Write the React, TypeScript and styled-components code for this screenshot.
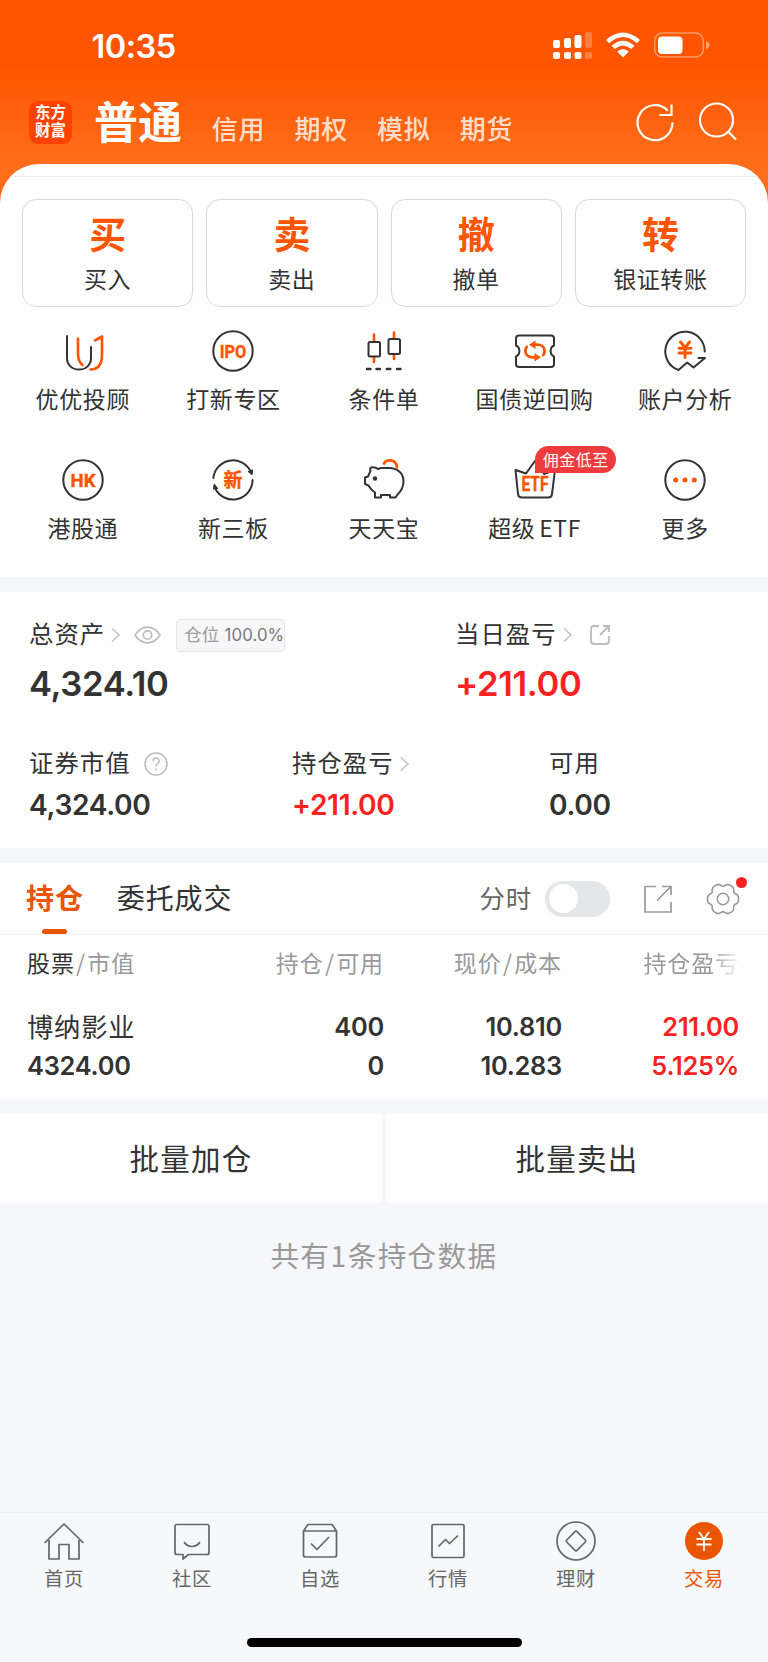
import React from "react";
import styled, { createGlobalStyle, css } from "styled-components";

const ORANGE = "#ff5500";
const INK = "#333333";
const RED = "#f92222";
const MIST = "#f6f7fa";
const CJK = `"Noto Sans CJK SC", sans-serif`;
const NUM = `Inter, "Noto Sans CJK SC", sans-serif`;

const GlobalStyle = createGlobalStyle`
  * { box-sizing: border-box; }
  body { margin: 0; background: ${MIST}; color: ${INK}; font-family: ${CJK}; }
  svg { display: block; flex: none; overflow: visible; }
`;

const Screen = styled.div`
  width: 768px;
  height: 1662px;
  display: flex;
  flex-direction: column;
  overflow: hidden;
  background: ${MIST};
`;

/* ---------- header ---------- */
const Hero = styled.header`
  height: 205px;
  flex: none;
  background: linear-gradient(180deg, #ff5500 0, #ff5500 68px, #ff6d1a 160px, #ff6f1c 205px);
`;
const StatusBar = styled.div`
  height: 92px;
  display: flex;
  align-items: flex-start;
  padding: 26px 59px 0 91.5px;
`;
const Clock = styled.span`
  font: 600 32.5px/41px ${NUM};
  color: #fff;
  letter-spacing: -0.5px;
  flex: 1;
`;
const StatusIcons = styled.div`
  display: flex;
  align-items: flex-start;
  padding-top: 6px;
  gap: 14px;
`;
const NavBar = styled.div`
  height: 71px;
  display: flex;
  padding: 0 30px 0 29px;
`;
const Logo = styled.div`
  width: 43px;
  height: 43px;
  margin-top: 9px;
  border-radius: 9px;
  background: #ff4200;
  color: #fff;
  font: 700 15.5px/18px "Liberation Serif", "Noto Sans CJK SC", serif;
  text-align: center;
  padding-top: 3px;
`;
const LogoLine = styled.div`
  height: 18px;
`;
const ActiveMode = styled.h1`
  margin: -3px 0 0 22px;
  font: 700 44px/62px ${CJK};
  color: #fff;
  width: 89px;
  white-space: nowrap;
`;
const Mode = styled.span`
  margin: 16.5px 0 0 28.7px;
  font: 500 26px/38px ${CJK};
  letter-spacing: 0.8px;
  color: rgba(255, 255, 255, 0.8);
  width: 54px;
  white-space: nowrap;
`;
const NavActions = styled.div`
  display: flex;
  gap: 23px;
  margin: 10px 0 0 auto;
`;

/* ---------- trading sheet ---------- */
const Sheet = styled.section`
  height: 413.5px;
  margin-top: -41.5px;
  flex: none;
  border-radius: 39px 39px 0 0;
  background: #fff;
  overflow: hidden;
`;
const SheetRule = styled.div`
  height: 13px;
  border-bottom: 1px solid #ededed;
`;
const TradeRow = styled.div`
  display: grid;
  grid-template-columns: repeat(4, 1fr);
  gap: 13px;
  padding: 22px 22px 0;
`;
const TradeCard = styled.div`
  height: 108px;
  border: 1px solid #d8d8d8;
  border-radius: 14px;
  text-align: center;
`;
const TradeGlyph = styled.div`
  margin: 9px 0 5px;
  font: 700 37px/48px ${CJK};
  color: ${ORANGE};
`;
const Label = styled.span`
  display: block;
  font: 400 23px/32px ${CJK};
  letter-spacing: 0.6px;
  word-spacing: -2px;
  white-space: nowrap;
  text-align: center;
`;
const ShortcutGrid = styled.div`
  display: grid;
  grid-template-columns: repeat(5, 1fr);
  padding: 23px 7.5px 0;
  row-gap: 42px;
`;
const Shortcut = styled.div`
  position: relative;
  height: 87px;
  display: flex;
  flex-direction: column;
  align-items: center;
  gap: 10.5px;
`;
const Promo = styled.span`
  position: absolute;
  left: 76px;
  top: -13px;
  width: 81px;
  height: 27px;
  border-radius: 13.5px 13.5px 13.5px 0;
  background: #ee3b3d;
  color: #fff;
  font: 400 16px/26px ${CJK};
  letter-spacing: 0.5px;
  text-align: center;
`;

/* ---------- assets ---------- */
const Band = styled.div<{ $h: number }>`
  height: ${(p) => p.$h}px;
  flex: none;
`;
const Assets = styled.section`
  height: 256px;
  flex: none;
  background: #fff;
  padding: 25px 29px 0;
`;
const AssetRow = styled.div<{ $cols: string; $h: number }>`
  display: grid;
  grid-template-columns: ${(p) => p.$cols};
  height: ${(p) => p.$h}px;
`;
const Metric = styled.div`
  display: flex;
  flex-direction: column;
`;
const MetricTitle = styled.div`
  height: 36px;
  display: flex;
  align-items: center;
`;
const MetricName = styled.span`
  font: 400 24.4px/34px ${CJK};
  letter-spacing: 1px;
  margin: -5px 6px 0 0;
  white-space: nowrap;
`;
const Amount = styled.span<{ $size: number; $gain?: boolean }>`
  font: 600 ${(p) => p.$size}px/44px ${NUM};
  letter-spacing: -0.35px;
  color: ${(p) => (p.$gain ? RED : INK)};
  ${(p) =>
    p.$size > 30
      ? css`
          margin-top: 8px;
        `
      : css`
          margin-top: 1px;
        `}
`;
const Ratio = styled.span`
  display: flex;
  align-items: center;
  width: 109px;
  height: 33px;
  margin-left: 15px;
  padding-left: 7px;
  border: 1px solid #e3e3e9;
  border-radius: 5px;
  background: #f7f7fa;
  white-space: nowrap;
`;
const RatioName = styled.span`
  font: 400 17.5px/26px ${CJK};
  color: #999;
  margin-top: -2px;
  width: 40.5px;
`;
const RatioValue = styled.span`
  font: 400 16.8px/26px ${NUM};
  color: #777;
  letter-spacing: 0.1px;
  margin-top: -1px;
`;

/* ---------- holdings ---------- */
const Holdings = styled.section`
  height: 236px;
  flex: none;
  background: #fff;
`;
const TabStrip = styled.div`
  height: 72px;
  display: flex;
  padding: 0 26px;
  border-bottom: 1px solid #f3f3f5;
`;
const Tab = styled.div<{ $active?: boolean }>`
  display: flex;
  flex-direction: column;
  align-items: center;
  padding-top: 13px;
  margin-right: 33px;
  font: ${(p) => (p.$active ? 700 : 400)} 28px/42px ${CJK};
  letter-spacing: 0.9px;
  color: ${(p) => (p.$active ? "#ea5504" : INK)};
  white-space: nowrap;
  &::after {
    content: "";
    width: 25px;
    height: 5px;
    margin-top: 11px;
    border-radius: 2.5px;
    background: ${(p) => (p.$active ? "#ea5504" : "transparent")};
  }
`;
const Tools = styled.div`
  display: flex;
  align-items: center;
  height: 72px;
  margin-left: auto;
`;
const ToolLabel = styled.span`
  font: 400 25.5px/38px ${CJK};
  letter-spacing: 0.8px;
  color: #666;
  margin: -4px 13px 0 0;
`;
const Switch = styled.span`
  width: 64.5px;
  height: 36.5px;
  border-radius: 19px;
  background: #e5e6e8;
  padding: 3.5px;
  margin-right: 34.5px;
  &::before {
    content: "";
    display: block;
    width: 29px;
    height: 29px;
    border-radius: 50%;
    background: #fff;
  }
`;
const GearBox = styled.span`
  position: relative;
  margin: 0 2px 0 34px;
`;
const Dot = styled.i`
  position: absolute;
  right: -7px;
  top: -5.5px;
  width: 11px;
  height: 11px;
  border-radius: 50%;
  background: #f92222;
`;
const Columns = styled.div`
  display: grid;
  grid-template-columns: 200px 157px 178px 177px;
  padding-left: 27px;
`;
const HeadRow = styled(Columns)`
  padding-top: 9.5px;
  font: 400 23px/34px ${CJK};
  letter-spacing: 0.9px;
  color: #999;
  white-space: nowrap;
`;
const HeadCell = styled.span<{ $right?: boolean; $fade?: boolean }>`
  text-align: ${(p) => (p.$right ? "right" : "left")};
  ${(p) =>
    p.$fade &&
    css`
      mask-image: linear-gradient(90deg, #000 148px, transparent 180px);
    `}
`;
const Strong = styled.span`
  color: ${INK};
`;
const Slash = styled.span`
  margin: 0 1.3px;
`;
const StockRow = styled(Columns)`
  padding-top: 28.5px;
`;
const StockCell = styled.div<{ $right?: boolean; $gain?: boolean }>`
  display: flex;
  flex-direction: column;
  align-items: ${(p) => (p.$right ? "flex-end" : "flex-start")};
  color: ${(p) => (p.$gain ? RED : INK)};
`;
const StockName = styled.span`
  font: 400 26.3px/39px ${CJK};
  letter-spacing: 0.8px;
  margin-top: -1.5px;
  height: 40.5px;
`;
const Figure = styled.span`
  font: 600 25.4px/39px ${NUM};
  letter-spacing: -0.25px;
`;

/* ---------- batch actions ---------- */
const BatchRow = styled.div`
  height: 90px;
  flex: none;
  display: grid;
  grid-template-columns: 1fr 1fr;
  gap: 4px;
`;
const BatchButton = styled.div`
  background: #fff;
  text-align: center;
  font: 400 29.5px/88px ${CJK};
  letter-spacing: 1.3px;
`;
const Summary = styled.p`
  margin: 30.5px 0 0;
  text-align: center;
  font: 400 28.6px/42px ${CJK};
  letter-spacing: 1.4px;
  color: #999;
`;

/* ---------- bottom bar ---------- */
const BottomBar = styled.nav`
  margin-top: auto;
  height: 150px;
  border-top: 1.5px solid #ebecee;
  background: #f7f8fa;
  display: flex;
  flex-direction: column;
  align-items: center;
`;
const BottomTabs = styled.div`
  width: 100%;
  height: 125px;
  display: grid;
  grid-template-columns: repeat(6, 1fr);
  padding-top: 7px;
`;
const BottomTab = styled.div<{ $active?: boolean }>`
  display: flex;
  flex-direction: column;
  align-items: center;
  gap: 1.5px;
  color: ${(p) => (p.$active ? "#ea5504" : "#666")};
  font: 400 19.3px/28px ${CJK};
  letter-spacing: 0.6px;
`;
const HomeIndicator = styled.div`
  width: 275px;
  height: 9px;
  border-radius: 5px;
  background: #000;
`;

/* ---------- icons ---------- */
const Ico = ({ children, s = 42 }: { children: React.ReactNode; s?: number }) => (
  <svg width={s} height={s} viewBox={`${-s / 2} ${-s / 2} ${s} ${s}`} fill="none" stroke={INK} strokeWidth="2" strokeLinecap="round" strokeLinejoin="round">
    {children}
  </svg>
);
const IconText = styled.text`
  font-family: Roboto, "Noto Sans CJK SC", sans-serif;
  font-weight: 700;
  fill: ${ORANGE};
  stroke: ${ORANGE};
  stroke-width: 0.4px;
  text-anchor: middle;
`;

const Chevron = () => (
  <svg width="9" height="14" viewBox="0 0 9 14" fill="none" stroke="#c4c4c4" strokeWidth="1.6">
    <path d="M1 0.5 8 7 1 13.5" />
  </svg>
);

const gearPath =
  Array.from({ length: 72 }, (_, i) => {
    const a = (i * Math.PI) / 36;
    const r = 14.5 + 1.4 * Math.cos(6 * a) - 0.4 * Math.cos(12 * a);
    return `${i ? "L" : "M"}${(r * Math.cos(a)).toFixed(2)} ${(r * Math.sin(a)).toFixed(2)}`;
  }).join("") + "Z";

const shortcuts: { name: string; icon: React.ReactNode; promo?: string }[] = [
  {
    name: "优优投顾",
    icon: (
      <Ico>
        <path d="M-16-15V7C-16 14-11 18.5-4 18.5S8 14 8 7V-4" />
        <g stroke={ORANGE} strokeWidth="2.6">
          <path d="M-5-12.5V3C-5 8-4 11-.5 14" />
          <path d="M12-10.5 19-14.5V4C19 13 15 18.3 7.500 18.500" />
        </g>
      </Ico>
    ),
  },
  {
    name: "打新专区",
    icon: (
      <Ico>
        <circle r="19.7" />
        <IconText y="6.600" fontSize="18.500" textLength="26.500" lengthAdjust="spacingAndGlyphs">IPO</IconText>
      </Ico>
    ),
  },
  {
    name: "条件单",
    icon: (
      <Ico>
        <g stroke={ORANGE} strokeWidth="2.600">
          <path d="M-10-16.500V-10M-10 6V11M10-18.500V-13M10 3V8" />
        </g>
        <rect x="-15.500" y="-9" width="11.500" height="14.500" rx="1.500" />
        <rect x="4.500" y="-12" width="11.500" height="15" rx="1.500" />
        <path d="M-17 18h3.500M-7.500 18h3.500M2.800 18h3.500M13 18h3.500" strokeWidth="2.400" />
      </Ico>
    ),
  },
  {
    name: "国债逆回购",
    icon: (
      <Ico>
        <path d="M-16-15.500H16Q19-15.500 19-12.500V-5.500C14.500-3.500 14.500 3.500 19 5.500V13Q19 16 16 16H-16Q-19 16-19 13V5.500C-14.500 3.500-14.500-3.500-19-5.500V-12.500Q-19-15.500-16-15.500Z" />
        <g stroke={ORANGE} strokeWidth="2.800">
          <path d="M0-6.300H2C7-6.300 9.600-3.500 9.600 0Q9.600 2.200 8.300 4" />
          <path d="M0 6.300H-2C-7 6.300-9.600 3.500-9.600 0Q-9.600-2.200-8.300-4" />
        </g>
        <path d="M-6-6.300.5-10.500V-2.100ZM6 6.300-.5 10.500V2.100Z" fill={ORANGE} stroke="none" />
      </Ico>
    ),
  },
  {
    name: "账户分析",
    icon: (
      <Ico>
        <path d="M19.700.5A19.700 19.700 0 1 0-6.500 19L2.200 11.500 8.500 16.500 20 7H13.500" />
        <path d="M-4.500-9 0-3.300 4.500-9M0-3V6.500M-6-2.800H6M-6 2H6" stroke={ORANGE} strokeWidth="2.900" />
      </Ico>
    ),
  },
  {
    name: "港股通",
    icon: (
      <Ico>
        <circle r="19.700" />
        <IconText y="6.600" fontSize="18.500" textLength="25" lengthAdjust="spacingAndGlyphs">HK</IconText>
      </Ico>
    ),
  },
  {
    name: "新三板",
    icon: (
      <Ico>
        <path d="M-19.600-2A19.700 19.700 0 0 1 17.500-9M19.600 0A19.700 19.700 0 0 1-17.500 9" />
        <path d="M15.500-8.500 19.500-10 19-5.500ZM-15.500 8.500-19.500 9-18.800 4.500Z" fill={INK} strokeWidth="1.200" />
        <IconText y="6.800" fontSize="19">新</IconText>
      </Ico>
    ),
  },
  {
    name: "天天宝",
    icon: (
      <Ico>
        <path d="M0-16.500C1.500-21 12-21.500 13-13" stroke={ORANGE} strokeWidth="2.800" />
        <path d="M-13-12.500Q-14.500-11.500-13.500-9L-16-3.500-19-2.500V4L-15.500 5.500Q-13 10-9 12.500V17.500H-3V15H6V17.500H11.500L13.500 14.500Q19.500 9 19.500 1C19.500-7 13-12 5-12H-3L-6-11Q-9-13.500-13-12.500Z" />
        <circle cx="-9" cy="-1.500" r="2.200" fill={INK} stroke="none" />
      </Ico>
    ),
  },
  {
    name: "超级 ETF",
    promo: "佣金低至",
    icon: (
      <Ico>
        <path d="M-19.500-10-17 14Q-16.500 17.500-13 17.500H13.500Q16.500 17.500 17 14L20-10 9-6 0-19-9-6.500Z" />
        <IconText y="11" fontSize="19.500" textLength="27" lengthAdjust="spacingAndGlyphs">ETF</IconText>
      </Ico>
    ),
  },
  {
    name: "更多",
    icon: (
      <Ico>
        <circle r="19.700" />
        <g fill={ORANGE} stroke="none">
          <circle cx="-9.300" r="2.500" />
          <circle r="2.500" />
          <circle cx="9.300" r="2.500" />
        </g>
      </Ico>
    ),
  },
];

const bottomTabs: { name: string; active?: boolean; icon: React.ReactNode }[] = [
  { name: "首页", icon: <path d="M-19.500 2 0-17 19.500 2M-15-1V18H-5V3.500H5V18H15V-1" /> },
  { name: "社区", icon: <path d="M-15-16.500H15Q17-16.500 17-14.500V11.500Q17 13.500 15 13.500H-3.500L-9 18V13.500H-15Q-17 13.500-17 11.500V-14.500Q-17-16.500-15-16.500ZM-8 1C-4 7 4 7 8 1" /> },
  { name: "自选", icon: <path d="M-16.500-10-12-16.500H12L16.500-10V14Q16.500 16 14.500 16H-14.500Q-16.500 16-16.500 14ZM-16.500-10H16.500M-9 2.500-3 8.500 9-4" /> },
  { name: "行情", icon: <path d="M-14.500-16.500H14.500Q16-16.500 16-15V15Q16 16.500 14.500 16.500H-14.500Q-16 16.500-16 15V-15Q-16-16.500-14.500-16.500ZM-9.500 5.500-2.500-1.500 1.500 2.500 10-5.500" /> },
  {
    name: "理财",
    icon: (
      <>
        <circle r="19" />
        <path d="M-1-9.300Q0-10.300 1-9.300L9.300-1Q10.300 0 9.300 1L1 9.300Q0 10.300-1 9.300L-9.300 1Q-10.300 0-9.300-1Z" />
      </>
    ),
  },
  {
    name: "交易",
    active: true,
    icon: (
      <>
        <circle r="19" fill="#ea5504" stroke="none" />
        <path d="M-5-9 0-2 5-9M0-2V10M-7.500-2H7.500M-7.500 3.500H7.500" stroke="#fff" strokeWidth="1.800" />
      </>
    ),
  },
];

const trades = [
  ["买", "买入"],
  ["卖", "卖出"],
  ["撤", "撤单"],
  ["转", "银证转账"],
];

export default function App() {
  return (
    <Screen>
      <GlobalStyle />
      <Hero>
        <StatusBar>
          <Clock>10:35</Clock>
          <StatusIcons>
            <svg width="39" height="27" viewBox="0 0 39 27" fill="#fff">
              <rect x="0" y="8" width="7" height="8" rx="2" />
              <rect x="11" y="6" width="7" height="10" rx="2" />
              <rect x="21.500" y="3" width="7" height="13" rx="2" />
              <rect x="32" y="0" width="7" height="16" rx="2" opacity=".25" />
              <rect x="0" y="20" width="7" height="7" rx="2" />
              <rect x="11" y="20" width="7" height="7" rx="2" />
              <rect x="21.500" y="20" width="7" height="7" rx="2" />
              <rect x="32" y="20" width="7" height="7" rx="2" opacity=".25" />
            </svg>
            <svg width="34" height="26" viewBox="0 0 34 26" fill="#fff">
              <path d="M0 8Q17-7 34 8L30.800 11.300Q17-1.300 3.200 11.300Z" />
              <path d="M5.500 13.800Q17 3.500 28.500 13.800L25.200 17Q17 10 8.800 17Z" />
              <path d="M11.200 19.500Q17 14.500 22.800 19.500L17 25.500Z" />
            </svg>
            <svg width="55" height="26" viewBox="0 0 55 26">
              <rect x="0.700" y="1" width="48.600" height="24" rx="7.500" fill="none" stroke="#fff" strokeOpacity=".4" strokeWidth="1.500" />
              <rect x="4" y="4.500" width="24.500" height="17.500" rx="4" fill="#fff" />
              <path d="M52 9Q55.500 10 55.500 13T52 17Z" fill="#fff" opacity=".45" />
            </svg>
          </StatusIcons>
        </StatusBar>
        <NavBar>
          <Logo>
            <LogoLine>东方</LogoLine>
            <LogoLine>财富</LogoLine>
          </Logo>
          <ActiveMode>普通</ActiveMode>
          <Mode>信用</Mode>
          <Mode>期权</Mode>
          <Mode>模拟</Mode>
          <Mode>期货</Mode>
          <NavActions>
            <svg width="40" height="40" viewBox="0.500 0.500 40 40" fill="none" stroke="#fff" strokeWidth="2.200">
              <path d="M33.300 9.200A17.500 17.500 0 1 0 38 21M37 3V13.500H25" />
            </svg>
            <svg width="40" height="40" viewBox="0 0 40 40" fill="none" stroke="#fff" strokeWidth="2.200">
              <circle cx="18.500" cy="18" r="16.500" />
              <path d="M30 29.500 38 37.500" />
            </svg>
          </NavActions>
        </NavBar>
      </Hero>

      <Sheet>
        <SheetRule />
        <TradeRow>
          {trades.map(([glyph, name]) => (
            <TradeCard key={name}>
              <TradeGlyph>{glyph}</TradeGlyph>
              <Label>{name}</Label>
            </TradeCard>
          ))}
        </TradeRow>
        <ShortcutGrid>
          {shortcuts.map((s) => (
            <Shortcut key={s.name}>
              {s.icon}
              <Label>{s.name}</Label>
              {s.promo && <Promo>{s.promo}</Promo>}
            </Shortcut>
          ))}
        </ShortcutGrid>
      </Sheet>

      <Band $h={15} />

      <Assets>
        <AssetRow $cols="426px 1fr" $h={129}>
          <Metric>
            <MetricTitle>
              <MetricName>总资产</MetricName>
              <Chevron />
              <svg width="41" height="18" viewBox="-14 0 41 18" fill="none" stroke="#bbb" strokeWidth="1.700">
                <path d="M1 9C8-1.500 19-1.500 26 9 19 19.500 8 19.500 1 9Z" />
                <circle cx="13.500" cy="9" r="4.200" />
              </svg>
              <Ratio>
                <RatioName>仓位</RatioName>
                <RatioValue>100.0%</RatioValue>
              </Ratio>
            </MetricTitle>
            <Amount $size={34.6}>4,324.10</Amount>
          </Metric>
          <Metric>
            <MetricTitle>
              <MetricName>当日盈亏</MetricName>
              <Chevron />
              <svg width="38" height="20" viewBox="-18 0 38 20" fill="none" stroke="#bbb" strokeWidth="1.800">
                <path d="M9 1H4Q1 1 1 4V16Q1 19 4 19H16Q19 19 19 16V11M13 1H19V7M19 1 10 10" />
              </svg>
            </MetricTitle>
            <Amount $size={34.6} $gain>+211.00</Amount>
          </Metric>
        </AssetRow>
        <AssetRow $cols="263px 257px 1fr" $h={90}>
          <Metric>
            <MetricTitle>
              <MetricName>证券市值</MetricName>
              <svg width="31" height="24" viewBox="-19 -12 31 24" fill="none" stroke="#bbb" strokeWidth="1.500">
                <circle r="11" />
                <path d="M-3-2.800C-3-7 3.200-7 3.200-3 3.200-.5 0-.5 0 2.500" />
                <path d="M0 4.500V6.200" />
              </svg>
            </MetricTitle>
            <Amount $size={28.2}>4,324.00</Amount>
          </Metric>
          <Metric>
            <MetricTitle>
              <MetricName>持仓盈亏</MetricName>
              <Chevron />
            </MetricTitle>
            <Amount $size={28.2} $gain>+211.00</Amount>
          </Metric>
          <Metric>
            <MetricTitle>
              <MetricName>可用</MetricName>
            </MetricTitle>
            <Amount $size={28.2}>0.00</Amount>
          </Metric>
        </AssetRow>
      </Assets>

      <Band $h={15} />

      <Holdings>
        <TabStrip>
          <Tab $active>持仓</Tab>
          <Tab>委托成交</Tab>
          <Tools>
            <ToolLabel>分时</ToolLabel>
            <Switch />
            <svg width="28" height="28" viewBox="0 0 28 28" fill="none" stroke="#999" strokeWidth="1.700">
              <path d="M12 1.500H1V27H27V17M18 1.500H27V10M27 1.500 13 15.500" />
            </svg>
            <GearBox>
              <svg width="34" height="34" viewBox="-17 -17 34 34" fill="none" stroke="#999" strokeWidth="1.600">
                <path d={gearPath} />
                <circle r="5.700" />
              </svg>
              <Dot />
            </GearBox>
          </Tools>
        </TabStrip>
        <HeadRow>
          <HeadCell><Strong>股票</Strong><Slash>/</Slash>市值</HeadCell>
          <HeadCell $right>持仓<Slash>/</Slash>可用</HeadCell>
          <HeadCell $right>现价<Slash>/</Slash>成本</HeadCell>
          <HeadCell $right $fade>持仓盈亏</HeadCell>
        </HeadRow>
        <StockRow>
          <StockCell>
            <StockName>博纳影业</StockName>
            <Figure>4324.00</Figure>
          </StockCell>
          <StockCell $right>
            <Figure>400</Figure>
            <Figure>0</Figure>
          </StockCell>
          <StockCell $right>
            <Figure>10.810</Figure>
            <Figure>10.283</Figure>
          </StockCell>
          <StockCell $right $gain>
            <Figure>211.00</Figure>
            <Figure>5.125%</Figure>
          </StockCell>
        </StockRow>
      </Holdings>

      <Band $h={14} />

      <BatchRow>
        <BatchButton>批量加仓</BatchButton>
        <BatchButton>批量卖出</BatchButton>
      </BatchRow>
      <Summary>共有1条持仓数据</Summary>

      <BottomBar>
        <BottomTabs>
          {bottomTabs.map((t) => (
            <BottomTab key={t.name} $active={t.active}>
              <svg width="42" height="42" viewBox="-21 -21 42 42" fill="none" stroke="#666" strokeWidth="1.700" strokeLinejoin="round">
                {t.icon}
              </svg>
              {t.name}
            </BottomTab>
          ))}
        </BottomTabs>
        <HomeIndicator />
      </BottomBar>
    </Screen>
  );
}
